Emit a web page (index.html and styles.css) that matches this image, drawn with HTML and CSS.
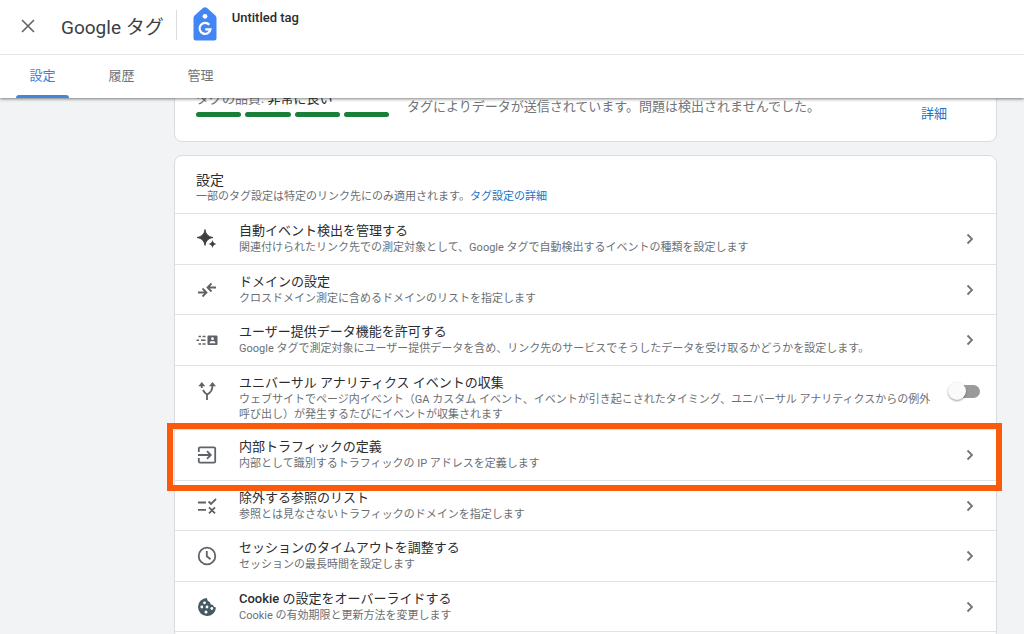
FILE: index.html
```html
<!DOCTYPE html>
<html lang="ja">
<head>
<meta charset="utf-8">
<meta name="viewport" content="width=device-width, initial-scale=1">
<title>Google タグ</title>
<link rel="stylesheet" href="styles.css">
</head>
<body>
<header class="header">
  <div class="topbar">
    <button class="close" type="button" aria-label="閉じる">
      <svg width="14" height="14" viewBox="0 0 14 14"><path d="M1 1l12 12M13 1L1 13" stroke="#5f6368" stroke-width="1.6"/></svg>
    </button>
    <h1 class="product">Google タグ</h1>
    <div class="tag">
      <svg class="tag-logo" width="24" height="34" viewBox="0 0 24 34">
        <path d="M10.2.8Q12-.5 13.8.8L22.4 8.5Q23.5 9.600 23.500 11.200V31Q23.500 33.500 21 33.500H3Q.5 33.500.5 31V11.200Q.5 9.600 1.600 8.500Z" fill="#4285f4"/>
        <circle cx="12" cy="9.300" r="2.400" fill="#fff"/>
        <path d="M16.300 17.800A5.500 5.500 0 1 0 17.500 22.300H12.200" fill="none" stroke="#fff" stroke-width="2.200"/>
      </svg>
      <span class="tag-name">Untitled tag</span>
    </div>
  </div>
  <nav class="tabs">
    <a class="tab tab-active" href="#settings" aria-current="page">設定</a>
    <a class="tab" href="#history">履歴</a>
    <a class="tab" href="#admin">管理</a>
  </nav>
</header>
<main class="content">
  <section class="card quality">
    <div class="quality-score">
      <p class="quality-label">タグの品質: <strong>非常に良い</strong></p>
      <div class="bars"><span class="bar"></span><span class="bar"></span><span class="bar"></span><span class="bar"></span></div>
    </div>
    <p class="quality-text">タグによりデータが送信されています。問題は検出されませんでした。</p>
    <a class="link quality-link" href="#detail">詳細</a>
  </section>
  <section class="card settings" id="settings">
    <div class="settings-head">
      <h2 class="settings-title">設定</h2>
      <p class="desc">一部のタグ設定は特定のリンク先にのみ適用されます。<a class="link" href="#more">タグ設定の詳細</a></p>
    </div>
    <ul class="rows">
      <li class="row">
        <svg class="icon" viewBox="0 0 20 20"><path d="M8 .500Q9 7.500 16 8.500Q9 9.500 8 16.500Q7 9.500 0 8.500Q7 7.500 8 .500Z" fill="#3c4043" stroke="#3c4043" stroke-width=".8"/><path d="M15.500 11Q16.200 14.300 19.500 15Q16.200 15.700 15.500 19Q14.800 15.700 11.500 15Q14.800 14.300 15.500 11Z" fill="#3c4043"/></svg>
        <div class="text"><h3 class="title">自動イベント検出を管理する</h3><p class="desc">関連付けられたリンク先での測定対象として、Google タグで自動検出するイベントの種類を設定します</p></div>
        <button class="open" type="button" aria-label="自動イベント検出を管理する"><svg width="8" height="12" viewBox="0 0 8 12"><path d="M1.500 1.500L6 6L1.500 10.500"/></svg></button>
      </li>
      <li class="row">
        <svg class="icon stroke" viewBox="0 0 20 20"><path d="M1 12.500H9M5.500 8.500L9.500 12.500L5.500 16.500M19 7.500H11M14.500 3.500L10.500 7.500L14.500 11.500"/></svg>
        <div class="text"><h3 class="title">ドメインの設定</h3><p class="desc">クロスドメイン測定に含めるドメインのリストを指定します</p></div>
        <button class="open" type="button" aria-label="ドメインの設定"><svg width="8" height="12" viewBox="0 0 8 12"><path d="M1.500 1.500L6 6L1.500 10.500"/></svg></button>
      </li>
      <li class="row">
        <svg class="icon icon-wide" viewBox="0 0 22 20"><path d="M2.500 6.500H5M6.500 6.500H9.500M.5 10.300H3M5 10.300H9.500M2.500 14H5M6.500 14H9.500" fill="none" stroke="#5f6368" stroke-width="1.500"/><rect x="11.500" y="5.500" width="10" height="9.500" rx="1" fill="#5f6368"/><circle cx="16.500" cy="8.700" r="1.400" fill="#fff"/><path d="M13.600 13.300Q13.600 11 16.500 11Q19.400 11 19.400 13.300Z" fill="#fff"/></svg>
        <div class="text"><h3 class="title">ユーザー提供データ機能を許可する</h3><p class="desc">Google タグで測定対象にユーザー提供データを含め、リンク先のサービスでそうしたデータを受け取るかどうかを設定します。</p></div>
        <button class="open" type="button" aria-label="ユーザー提供データ機能を許可する"><svg width="8" height="12" viewBox="0 0 8 12"><path d="M1.500 1.500L6 6L1.500 10.500"/></svg></button>
      </li>
      <li class="row">
        <svg class="icon stroke" viewBox="0 0 20 20"><path d="M10 19V13.500Q15.500 11 15.500 4.500"/><path d="M10 13.500Q7.500 12 6 9M4.900 7L4.500 4"/><path d="M1.300 5.200L4.800 1L8.300 5.200ZM12 5.200L15.500 1L19 5.200Z" fill="#5f6368" stroke="none"/></svg>
        <div class="text"><h3 class="title"><label for="ua">ユニバーサル アナリティクス イベントの収集</label></h3><p class="desc">ウェブサイトでページ内イベント（GA カスタム イベント、イベントが引き起こされたタイミング、ユニバーサル アナリティクスからの例外呼び出し）が発生するたびにイベントが収集されます</p></div>
        <span class="switch-cell"><input class="switch" type="checkbox" role="switch" id="ua"></span>
      </li>
      <li class="row row-marked">
        <svg class="icon stroke" viewBox="0 0 20 20"><path d="M1.800 7V3.500Q1.800 2.300 3 2.300H17Q18.200 2.300 18.200 3.500V16.500Q18.200 17.700 17 17.700H3Q1.800 17.700 1.800 16.500V13M1 10H13.500M10 6.200L13.800 10L10 13.800"/></svg>
        <div class="text"><h3 class="title">内部トラフィックの定義</h3><p class="desc">内部として識別するトラフィックの IP アドレスを定義します</p></div>
        <button class="open" type="button" aria-label="内部トラフィックの定義"><svg width="8" height="12" viewBox="0 0 8 12"><path d="M1.500 1.500L6 6L1.500 10.500"/></svg></button>
      </li>
      <li class="row">
        <svg class="icon stroke" viewBox="0 0 20 20"><path d="M1 6.500H9M1 13.800H9M11.500 5.500L14 8L19 3M12 11.300L18 17.300M18 11.300L12 17.300"/></svg>
        <div class="text"><h3 class="title">除外する参照のリスト</h3><p class="desc">参照とは見なさないトラフィックのドメインを指定します</p></div>
        <button class="open" type="button" aria-label="除外する参照のリスト"><svg width="8" height="12" viewBox="0 0 8 12"><path d="M1.500 1.500L6 6L1.500 10.500"/></svg></button>
      </li>
      <li class="row">
        <svg class="icon stroke" viewBox="0 0 20 20"><circle cx="10" cy="10" r="8.300"/><path d="M9.800 5V10.300L13.500 13.300"/></svg>
        <div class="text"><h3 class="title">セッションのタイムアウトを調整する</h3><p class="desc">セッションの最長時間を設定します</p></div>
        <button class="open" type="button" aria-label="セッションのタイムアウトを調整する"><svg width="8" height="12" viewBox="0 0 8 12"><path d="M1.500 1.500L6 6L1.500 10.500"/></svg></button>
      </li>
      <li class="row">
        <svg class="icon" viewBox="0 0 20 20"><path d="M10 1A9 9 0 1 0 19 10.500Q16.500 10.500 16 8Q13 8 13 5Q10 4.500 10 1Z" fill="#455a64"/><g fill="#fff"><circle cx="7.500" cy="5.800" r="1.400"/><circle cx="4.800" cy="10" r="1.400"/><circle cx="10" cy="10" r="1.400"/><circle cx="14.800" cy="11.500" r="1.400"/><circle cx="9" cy="15" r="1.500"/></g></svg>
        <div class="text"><h3 class="title"><span class="latin">Cookie</span> の設定をオーバーライドする</h3><p class="desc">Cookie の有効期限と更新方法を変更します</p></div>
        <button class="open" type="button" aria-label="Cookie の設定をオーバーライドする"><svg width="8" height="12" viewBox="0 0 8 12"><path d="M1.500 1.500L6 6L1.500 10.500"/></svg></button>
      </li>
    </ul>
  </section>
</main>
</body>
</html>
```
FILE: styles.css
```css
* { box-sizing: border-box; }
body {
  margin: 0;
  min-height: 100vh;
  display: flex;
  flex-direction: column;
  background: #f1f3f4;
  color: #2b2c2f;
  font-family: Roboto, "Noto Sans CJK JP", sans-serif;
  font-size: 13px;
}
h1, h2, h3, p, ul { margin: 0; padding: 0; font-weight: 400; }
ul { list-style: none; }
button { border: 0; padding: 0; background: none; cursor: pointer; }
svg { display: block; }

.header {
  position: relative;
  z-index: 1;
  background: #fff;
  box-shadow: 0 1px 3px rgba(0, 0, 0, .5);
}
.topbar {
  display: flex;
  height: 55px;
  padding-left: 21px;
  border-bottom: 1px solid #e4e6e8;
}
.close { display: flex; align-items: center; height: 52px; padding: 0 26px 0 0; }
.product {
  font-size: 19px;
  line-height: 56px;
  color: #3c4043;
  white-space: nowrap;
}
.tag {
  display: flex;
  align-items: flex-start;
  gap: 15px;
  height: 30px;
  margin: 10px 0 0 12px;
  padding-left: 16px;
  border-left: 1px solid #dadce0;
}
.tag-logo { margin-top: -3px; }
.tag-name { font-weight: 500; line-height: 15px; }
.tabs { display: flex; gap: 26px; padding-left: 16px; }
.tab {
  position: relative;
  width: 53px;
  height: 43px;
  color: #70757a;
  line-height: 42px;
  text-align: center;
  text-decoration: none;
}
.tab-active { color: #3c7dd9; }
.tab-active::after {
  content: "";
  position: absolute;
  inset: auto 0 0;
  height: 3px;
  border-radius: 3px 3px 0 0;
  background: #4285dc;
}

.content {
  flex: 1;
  display: flex;
  flex-direction: column;
  gap: 13px;
  padding: 0 27px 0 174px;
}
.card { background: #fff; border: 1px solid #dadce0; border-radius: 8px; }
.quality {
  display: flex;
  align-items: flex-start;
  margin-top: -28px;
  padding: 19px 49px 18px 21px;
}
.quality-score { width: 193px; }
.quality-label { line-height: 18px; margin-bottom: 4px; color: #70757a; }
.quality-label strong { font-weight: 400; color: #2b2c2f; }
.bars { display: flex; gap: 4px; }
.bar { flex: 1; height: 5px; border-radius: 3px; background: #188038; }
.quality-text { flex: 1; padding: 8px 0 0 18px; color: #70757a; line-height: 18px; }
.quality-link { padding-top: 15px; line-height: 18px; }
.link { color: #1a73c8; text-decoration: none; }

.settings {
  flex: 1;
  display: flex;
  flex-direction: column;
  margin-bottom: -6px;
  padding-bottom: 7px;
}
.settings-head { padding: 15px 21px 9px; border-bottom: 1px solid #e0e2e4; }
.settings-title { font-size: 14px; line-height: 18px; }
.title { font-size: 13px; line-height: 18px; }
.latin { font-weight: 500; }
.desc { font-size: 11px; line-height: 15px; color: #6b6f74; }
.rows { flex: 1; display: grid; }
.row {
  position: relative;
  display: flex;
  align-items: flex-start;
  padding: 8px 0 6px;
  border-bottom: 1px solid #e0e2e4;
}
.icon { flex: none; width: 20px; height: 20px; margin: 7px 22px 0; }
.icon-wide { width: 22px; margin: 7px 21px 0; }
.stroke { fill: none; stroke: #5f6368; stroke-width: 1.8; }
.text { flex: 1; padding-right: 4px; }
.open { width: 52px; height: 34px; display: grid; place-items: center; }
.open path { fill: none; stroke: #70757a; stroke-width: 1.8; }
.switch-cell { width: 52px; padding: 11px 0 0 4px; }
.switch {
  appearance: none;
  position: relative;
  display: block;
  width: 28px;
  height: 13px;
  margin: 0 0 0 4px;
  border-radius: 7px;
  background: #9a9a9a;
}
.switch::before {
  content: "";
  position: absolute;
  left: -4px;
  top: -3px;
  width: 18px;
  height: 18px;
  border-radius: 50%;
  background: #fafafa;
  box-shadow: 0 1px 2px rgba(0, 0, 0, .4);
}
.row-marked::after {
  content: "";
  position: absolute;
  z-index: 1;
  inset: -7px -6px -11px -8px;
  border: 6px solid #fa5a0a;
  pointer-events: none;
}
```
